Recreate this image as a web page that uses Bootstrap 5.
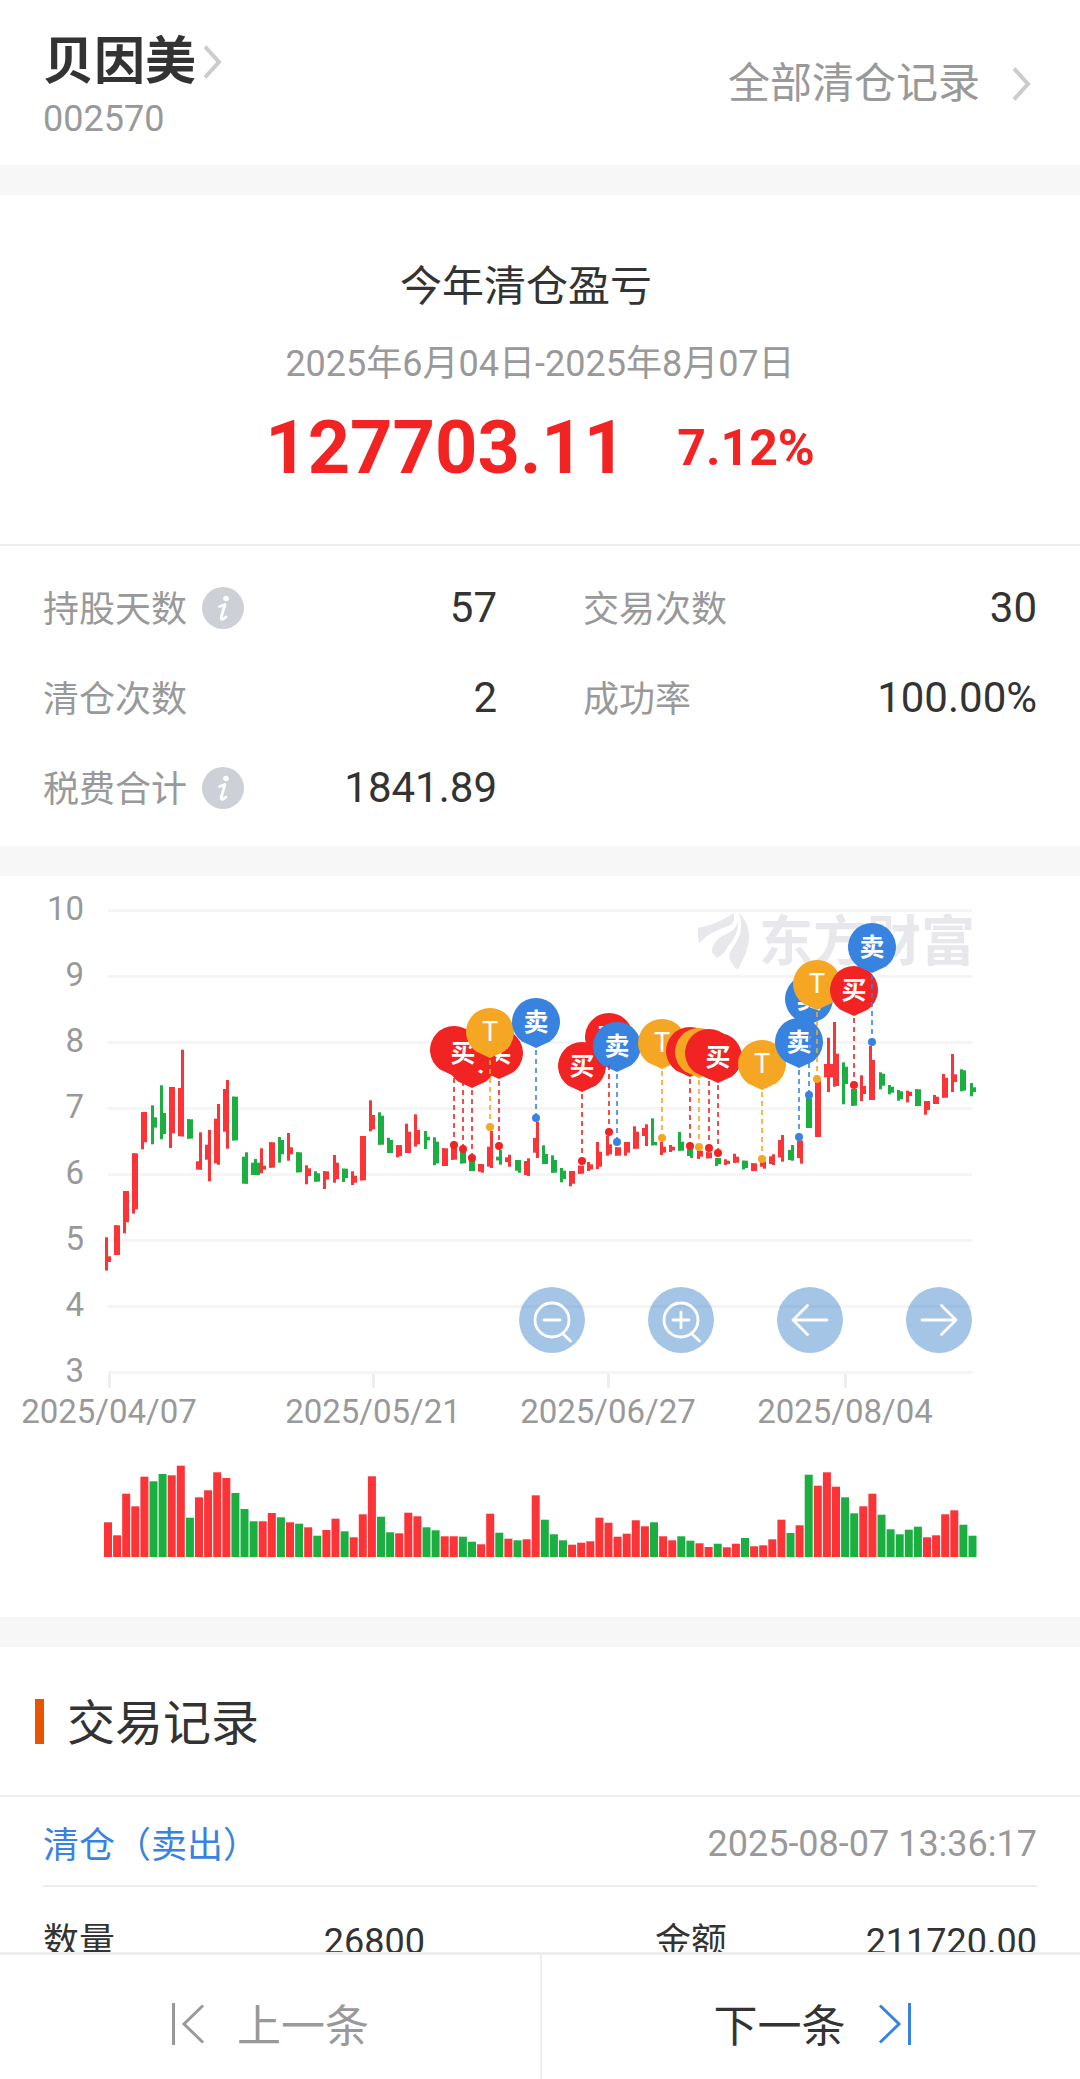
<!DOCTYPE html>
<html lang="zh-CN">
<head>
<meta charset="utf-8">
<meta name="viewport" content="width=device-width, initial-scale=1">
<title>贝因美 清仓记录</title>
<link href="https://cdn.jsdelivr.net/npm/bootstrap@5.3.0/dist/css/bootstrap.min.css" rel="stylesheet">
<style>
  :root { --ink: #333; --muted: #999; --rule: #eee; --rise: #f12323; --blue: #3883e0; }
  body { font-family: Roboto, "Noto Sans CJK SC", sans-serif; font-size: 36px; line-height: 54px; color: var(--ink); background: #fff; }
  a { color: inherit; text-decoration: none; }
  .gutter { padding-left: 43px; padding-right: 43px; }
  .band { height: 30px; background: #f7f7f7; }
  .soft { color: var(--muted); }
  .t42 { font-size: 42px; }
  .head-bar { padding-top: 30px; padding-bottom: 18px; height: 165px; }
  .stock-name { font-size: 51px; line-height: 60px; font-weight: 700; margin: 0; }
  .chev { fill: none; stroke: #ccc; stroke-width: 4; display: block; }
  .all-link { gap: 33px; margin-bottom: 10px; padding-right: 6px; }
  .summary { padding: 62px 0 51px; border-bottom: 2px solid var(--rule); }
  .summary-title { font-size: 42px; line-height: 60px; padding-right: 28px; margin: 0 0 20px; font-weight: 400; }
  .profit { font-size: 74px; line-height: 90px; font-weight: 700; color: var(--rise); }
  .rate { font-size: 50px; font-weight: 700; color: var(--rise); }
  .profit-row { gap: 51px; margin-top: 12px; }
  .stats { padding: 17px 0 13px; }
  .stat { height: 90px; }
  .stat .soft { padding-top: 4px; }
  .info-btn { width: 42px; height: 42px; margin-left: 15px; }
  .chart-box svg.plot { display: block; width: 100%; height: auto; }
  .plot text { font-size: 33px; fill: var(--muted); }
  .plot .pin-label { font-size: 25px; fill: #fff; text-anchor: middle; font-weight: 700; }
  .plot .pin-t { font-size: 27px; font-weight: 400; }
  .plot .brand { font-size: 54px; font-weight: 700; fill: #e7e7ec; }
  .tools { top: 411px; right: 10%; gap: 63px; }
  .tool-btn { width: 66px; height: 66px; background: rgba(56, 126, 200, .45); }
  .tool-btn svg, .info-btn svg { display: block; }
  .list-title { height: 150px; padding-left: 35px; border-bottom: 2px solid var(--rule); }
  .list-title h2 { font-size: 48px; line-height: 60px; font-weight: 400; margin: 0; padding-top: 6px; }
  .accent { width: 9px; height: 45px; background: #e85500; margin-right: 23px; }
  .deal-head { height: 90px; padding-top: 6px; border-bottom: 2px solid var(--rule); }
  .deal-kind { color: var(--blue); padding-top: 4px; }
  .deal-row { height: 110px; gap: 230px; }
  .pager { height: 127px; background: #fff; border-top: 3px solid var(--rule); }
  .pager .btn { font-size: 44px; line-height: 60px; gap: 32px; padding: 14px 0 0; color: var(--ink); }
  .pager .btn span { padding-top: 6px; }
  .pager .btn + .btn { border-left: 2px solid var(--rule); padding-left: 3px; }
  .pager .btn.soft { color: var(--muted); }
</style>
</head>
<body>
<header class="head-bar gutter d-flex justify-content-between align-items-center">
  <div>
    <a href="#" class="d-flex align-items-center">
      <h1 class="stock-name">贝因美</h1>
      <svg class="chev ms-2" width="18" height="34" viewBox="0 0 18 34"><path d="M1 1.500L15 17L1 32.500"/></svg>
    </a>
    <div class="soft">002570</div>
  </div>
  <a href="#" class="all-link d-flex align-items-center soft t42">
    <span>全部清仓记录</span>
    <svg class="chev" width="18" height="34" viewBox="0 0 18 34"><path d="M1 1.500L15 17L1 32.500"/></svg>
  </a>
</header>
<div class="band"></div>

<section class="summary text-center">
  <h2 class="summary-title">今年清仓盈亏</h2>
  <div class="soft">2025年6月04日-2025年8月07日</div>
  <div class="profit-row d-flex justify-content-center align-items-center">
    <span class="profit">127703.11</span><span class="rate">7.12%</span>
  </div>
</section>

<section class="stats row g-0">
  <div class="col-6 gutter stat d-flex align-items-center">
    <span class="soft">持股天数</span>
    <button class="info-btn btn p-0 border-0 rounded-circle" aria-label="持股天数说明"><svg width="42" height="42" viewBox="0 0 42 42"><circle cx="21" cy="21" r="21" fill="#cdd0d6"/><circle cx="24" cy="11.500" r="2.800" fill="#fff"/><path d="M17.500 19.500L23 17.500L19.300 30C18.500 33.500 21.500 32.500 24 30" fill="none" stroke="#fff" stroke-width="2.800" stroke-linecap="round" stroke-linejoin="round"/></svg></button>
    <span class="t42 ms-auto">57</span>
  </div>
  <div class="col-6 gutter stat d-flex align-items-center">
    <span class="soft">交易次数</span><span class="t42 ms-auto">30</span>
  </div>
  <div class="col-6 gutter stat d-flex align-items-center">
    <span class="soft">清仓次数</span><span class="t42 ms-auto">2</span>
  </div>
  <div class="col-6 gutter stat d-flex align-items-center">
    <span class="soft">成功率</span><span class="t42 ms-auto">100.00%</span>
  </div>
  <div class="col-6 gutter stat d-flex align-items-center">
    <span class="soft">税费合计</span>
    <button class="info-btn btn p-0 border-0 rounded-circle" aria-label="税费合计说明"><svg width="42" height="42" viewBox="0 0 42 42"><circle cx="21" cy="21" r="21" fill="#cdd0d6"/><circle cx="24" cy="11.500" r="2.800" fill="#fff"/><path d="M17.500 19.500L23 17.500L19.300 30C18.500 33.500 21.500 32.500 24 30" fill="none" stroke="#fff" stroke-width="2.800" stroke-linecap="round" stroke-linejoin="round"/></svg></button>
    <span class="t42 ms-auto">1841.89</span>
  </div>
</section>
<div class="band"></div>

<section class="chart-box position-relative">
  <svg class="plot" viewBox="0 0 1080 741" role="img" aria-label="股价走势与买卖点">
    <g id="axes"></g>
    <g transform="translate(690 14) scale(.3333)" fill="#e7e7ec">
      <path d="M24 113C60 110 100 90 130 70C135 84 132 97 122 106C90 116 50 132 28 160C23 145 23 128 24 113Z"/>
      <path d="M137 70C152 104 134 122 104 134C80 146 68 162 65 186L80 204C98 196 108 182 114 168C140 140 152 110 137 70Z"/>
      <path d="M147 70C172 92 178 122 177 150C172 188 156 216 142 239C128 224 118 212 117 194C134 158 168 134 147 70Z"/>
    </g>
    <text class="brand" x="759" y="85">东方财富</text>
    <g id="candles"></g>
    <g id="pins"></g>
    <g id="volume"></g>
  </svg>
  <div class="tools position-absolute d-flex">
    <button class="tool-btn btn p-0 border-0 rounded-circle" aria-label="缩小"><svg width="66" height="66" viewBox="0 0 66 66" fill="none" stroke="#fff" stroke-width="2.800" stroke-linecap="round"><circle cx="33" cy="33" r="17"/><path d="M25 33H41M43.500 46.500L51.500 54"/></svg></button>
    <button class="tool-btn btn p-0 border-0 rounded-circle" aria-label="放大"><svg width="66" height="66" viewBox="0 0 66 66" fill="none" stroke="#fff" stroke-width="2.800" stroke-linecap="round"><circle cx="33" cy="33" r="17"/><path d="M25 33H41M33 25V41M43.500 46.500L51.500 54"/></svg></button>
    <button class="tool-btn btn p-0 border-0 rounded-circle" aria-label="向左"><svg width="66" height="66" viewBox="0 0 66 66" fill="none" stroke="#fff" stroke-width="2.800" stroke-linecap="round" stroke-linejoin="round"><path d="M50 33H16M30.500 18.500L16 33L30.500 47.500"/></svg></button>
    <button class="tool-btn btn p-0 border-0 rounded-circle" aria-label="向右"><svg width="66" height="66" viewBox="0 0 66 66" fill="none" stroke="#fff" stroke-width="2.800" stroke-linecap="round" stroke-linejoin="round"><path d="M16 33H50M35.500 18.500L50 33L35.500 47.500"/></svg></button>
  </div>
</section>
<div class="band"></div>

<section>
  <div class="list-title d-flex align-items-center"><span class="accent"></span><h2>交易记录</h2></div>
  <div class="gutter">
    <div class="deal-head d-flex justify-content-between align-items-center">
      <span class="deal-kind">清仓（卖出）</span><span class="soft">2025-08-07 13:36:17</span>
    </div>
    <div class="deal-row d-flex align-items-center">
      <div class="flex-fill w-50 d-flex justify-content-between"><span>数量</span><span>26800</span></div>
      <div class="flex-fill w-50 d-flex justify-content-between"><span>金额</span><span>211720.00</span></div>
    </div>
  </div>
</section>

<nav class="pager fixed-bottom d-flex">
  <button class="btn soft border-0 rounded-0 w-50 d-flex justify-content-center align-items-center">
    <svg width="34" height="44" viewBox="0 0 34 44" fill="none" stroke="currentColor" stroke-width="3"><path d="M2.500 1V43M32 3.500L13 22L32 40.500"/></svg>
    <span>上一条</span>
  </button>
  <button class="btn border-top-0 border-bottom-0 border-end-0 rounded-0 w-50 d-flex justify-content-center align-items-center">
    <span>下一条</span>
    <svg width="34" height="44" viewBox="0 0 34 44" fill="none" stroke="#3883e0" stroke-width="3"><path d="M31.500 1V43M2 3.500L21 22L2 40.500"/></svg>
  </button>
</nav>

<script src="https://cdn.jsdelivr.net/npm/bootstrap@5.3.0/dist/js/bootstrap.bundle.min.js"></script>
<script>
  const RISE = '#fb3438', FALL = '#1bae40';
  const PIN = { B: ['#f12323', '买'], S: ['#3883e0', '卖'], T: ['#f5a623', 'T'] };
  const rect = (x, y, w, h, c) => `<rect x="${x}" y="${y.toFixed(1)}" width="${w}" height="${h.toFixed(1)}" fill="${c}"/>`;

  // price grid 10..3 and date ticks
  let out = '';
  for (let v = 10; v >= 3; v--) {
    const y = 34 + (10 - v) * 66;
    out += rect(108, y - 1, 864, 3, '#f5f5f5') + `<text x="84" y="${y + 10}" text-anchor="end">${v}</text>`;
  }
  [[109, '2025/04/07'], [373, '2025/05/21'], [608, '2025/06/27'], [845, '2025/08/04']].forEach(([x, t]) => {
    out += rect(x - 1, 498, 3, 14, '#eee') + `<text x="${x}" y="547" text-anchor="middle">${t}</text>`;
  });
  document.getElementById('axes').innerHTML = out;

  // candles: high, low, body top, body bottom, R/G, wick side (l, m, r); three units to a pixel
  const candles = `1102,1202,1159,1176,R,l 1066,1155,1066,1155,R,l 963,1090,963,1057,R,l 850,1031,850,1018,R,l 726,838,726,817,R,l
706,823,742,773,G,l 646,808,729,792,G,l 651,834,651,790,R,l 539,799,654,799,R,r 748,806,748,806,G,l 787,899,874,899,R,r
780,934,824,869,R,r 702,884,746,880,R,r 630,836,657,785,R,r 680,811,680,811,G,l 847,941,860,941,G,r 867,915,878,915,G,m
835,910,887,899,R,l 817,893,817,893,R,l 801,878,810,853,G,l 789,872,832,853,R,l 847,907,847,907,G,l 886,943,895,918,R,l
904,935,910,935,G,l 904,957,904,929,R,l 855,938,878,927,R,l 896,936,896,924,G,l 904,945,917,938,R,l 798,931,798,931,R,l
691,784,735,778,R,l 727,824,737,824,G,l 803,849,810,849,G,l 825,862,825,858,R,l 761,849,785,849,R,l 733,830,780,823,R,l
783,837,800,811,G,l 802,886,815,880,G,l 835,888,835,888,R,l 830,869,830,869,R,l 845,880,845,880,G,l 873,903,873,903,G,l
882,908,882,905,R,r 783,894,830,890,R,r 840,884,860,871,G,r 854,890,862,876,R,r 870,908,870,902,G,r 865,918,873,915,R,r
755,864,804,848,R,r 826,882,852,882,G,l 856,908,870,908,G,l 894,937,902,927,G,l 903,949,903,941,R,l 887,911,887,911,R,l
876,903,883,899,R,l 816,897,845,890,R,l 798,857,823,853,R,l 832,857,832,857,R,l 816,857,816,848,R,l 769,836,785,836,R,l
763,828,774,798,R,r 745,826,816,826,G,l 815,855,830,848,R,l 825,846,830,841,R,l 786,842,815,842,G,l 838,864,838,858,G,r
842,867,842,860,R,l 847,865,847,865,R,l 864,888,864,883,G,l 868,885,872,882,R,l 851,878,860,878,R,l 872,898,872,894,G,l
880,903,880,903,R,l 875,896,875,890,R,r 853,885,859,882,R,r 795,875,810,862,R,r 825,872,840,870,G,r 812,881,812,864,R,r
685,774,685,774,G,l 632,801,632,801,R,l 503,666,582,622,R,m 456,650,551,648,R,l 577,703,590,642,G,l 657,707,657,707,G,l
616,693,648,672,R,l 528,690,570,690,R,l 607,658,611,647,G,l 645,673,650,668,G,l 660,692,664,688,G,l 662,697,665,678,R,l
658,708,658,708,G,l 693,734,693,720,R,l 675,702,680,702,R,l 612,683,623,683,R,l 552,666,613,636,R,l 598,664,601,662,G,l
639,679,652,666,G,l`.split(/\s+/);
  document.getElementById('candles').innerHTML = candles.map((s, i) => {
    const [hi, lo, t, b, c, side] = s.split(','), col = c === 'R' ? RISE : FALL;
    const x = Math.round(105 + i * 9.1), Y = v => v / 3 - 6;
    const wide = side === 'm', wx = x + (side === 'l' ? 0 : 3);
    return rect(wx, Y(hi), 3, (lo - hi) / 3, col) + rect(x, Y(t), wide ? 9 : 6, (b - t) / 3, col);
  }).join('');

  // volume heights, three units to a pixel; minus sign marks a falling day
  const volume = [104,65,190,152,241,-227,-249,245,274,-118,179,200,254,237,-192,-144,-107,107,132,-119,104,-100,89,-64,81,115,-77,59,128,242,-121,-74,71,133,122,-89,-80,62,62,-61,-46,38,130,-73,55,-50,53,185,
    -112,-68,-50,37,43,47,118,103,61,70,110,92,-104,62,50,-62,-49,41,30,-40,29,40,-57,32,35,53,112,-72,95,-247,214,254,211,-179,-131,152,190,-127,-83,-68,-82,-91,59,65,128,140,-97,-64];
  document.getElementById('volume').innerHTML = volume.map((v, i) =>
    rect((104 + i * 9.1).toFixed(1), 681 - Math.abs(v) / 3, 8, Math.abs(v) / 3, v > 0 ? RISE : FALL)).join('');

  // trade pins: kind, x, centre of the bubble, y of the marked dot; a trailing 0 leaves a covered bubble unlabelled
  const pins = [['B',454,174,269,0],['B',499,177,270],['B',472,186,282],['B',463,177,273],['T',490,156,251],['S',536,146,242],
    ['B',609,161,256],['B',582,190,285],['S',617,170,266],['T',662,167,262],['B',690,175,270,0],['T',699,176,271,0],
    ['B',709,177,272,0],['B',718,181,277],['T',762,188,283],['S',809,123,219],['S',799,166,261],['T',817,108,203],['B',854,114,209],['S',872,71,166]];
  document.getElementById('pins').innerHTML = pins.map(([k, x, y, d, label = 1]) =>
    `<path d="M${x} ${y + 26}L${x - 14} ${y + 19.5}A24 24 0 1 1 ${x + 14} ${y + 19.5}Z" fill="${PIN[k][0]}"/>` +
    (label ? `<text class="pin-label${k === 'T' ? ' pin-t' : ''}" x="${x}" y="${y + 9}">${PIN[k][1]}</text>` : '')).join('') +
    pins.map(([k, x, y, d]) =>
    `<path d="M${x} ${y + 28}V${d}" stroke="${PIN[k][0]}" stroke-width="2" stroke-dasharray="5 4" opacity=".8"/><circle cx="${x}" cy="${d}" r="4" fill="${PIN[k][0]}"/>`).join('');
</script>
</body>
</html>
